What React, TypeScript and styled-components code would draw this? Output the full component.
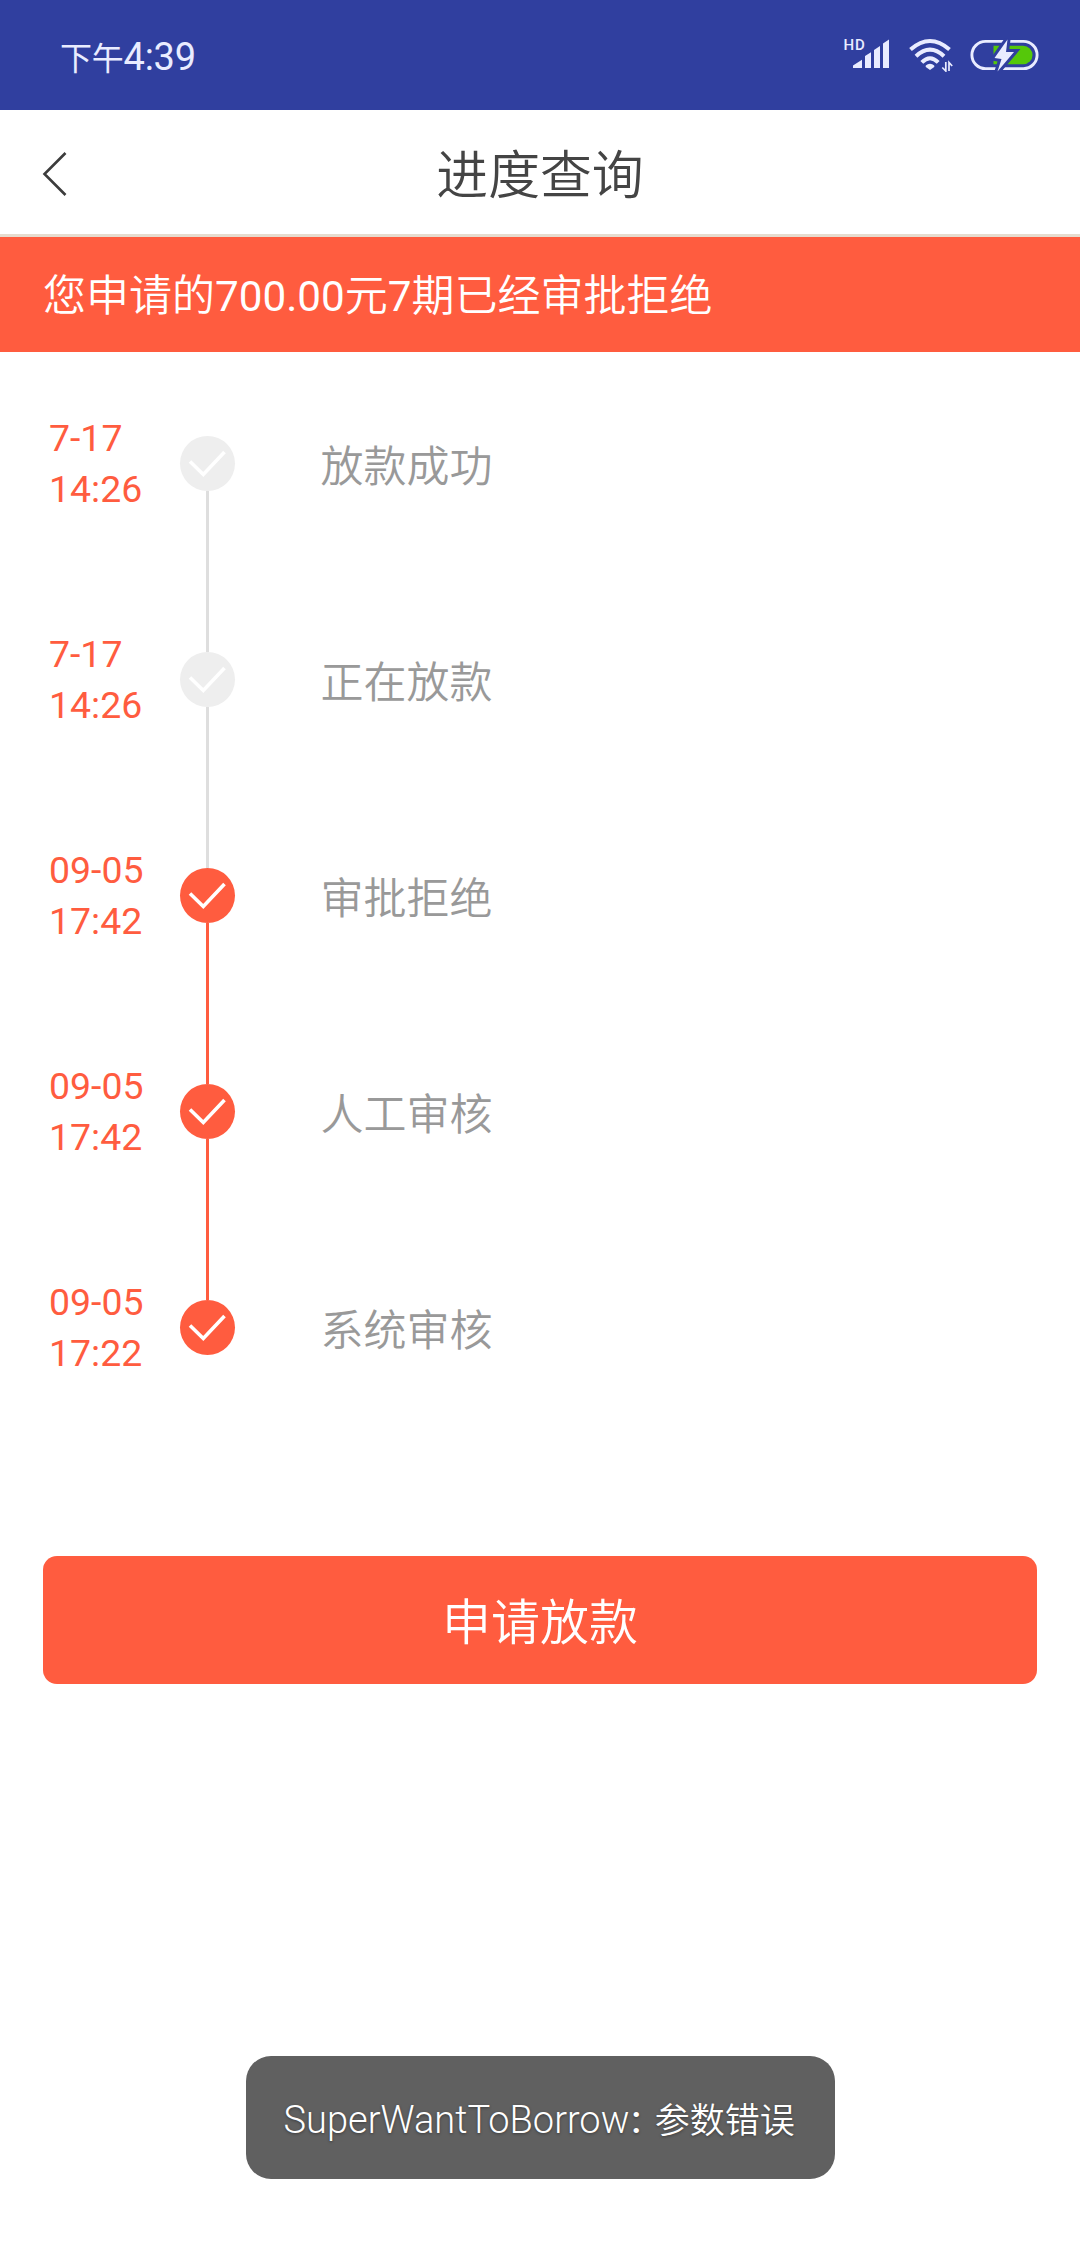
import React from "react";
import styled, { createGlobalStyle } from "styled-components";

const ORANGE = "#ff5c3f";
const CJK = `"Noto Sans CJK SC", sans-serif`;

const GlobalStyle = createGlobalStyle`
  * { box-sizing: border-box; }
  body {
    margin: 0;
    background: #fff;
    font-family: Roboto, ${CJK};
    font-weight: 400;
  }
`;

const Screen = styled.div`
  display: flex;
  flex-direction: column;
  width: 1080px;
  height: 2248px;
  background: #fff;
  overflow: hidden;
`;

const StatusBar = styled.div`
  display: flex;
  flex: none;
  align-items: center;
  justify-content: space-between;
  height: 110px;
  padding: 0 41px 0 60px;
  background: #303f9f;
  color: #e9ecff;
`;

const Clock = styled.div`
  display: flex;
  align-items: baseline;
  padding-top: 3px;
  font-size: 38px;
  font-weight: 400;
  line-height: 44px;
  letter-spacing: -0.3px;
`;

const Meridiem = styled.span`
  font-family: ${CJK};
  font-size: 32px;
  letter-spacing: -0.2px;
  line-height: 40px;
`;

const StatusIcons = styled.div`
  display: flex;
  align-items: center;
`;

const Signal = styled.div`
  position: relative;
  display: flex;
  width: 44px;
  height: 34px;
  margin-right: 20px;
`;

const HdTag = styled.span`
  position: absolute;
  left: -1px;
  top: -1px;
  font-size: 15px;
  line-height: 16px;
  font-weight: 500;
  letter-spacing: 0.8px;
`;

const Wifi = styled.svg`
  margin-right: 17.5px;
`;

const Header = styled.header`
  display: grid;
  flex: none;
  grid-template-columns: 120px 1fr 120px;
  align-items: center;
  height: 127px;
  border-bottom: 3px solid #e6dccf;
`;

const BackButton = styled.button`
  display: flex;
  align-items: center;
  height: 100%;
  padding: 3px 0 0 42px;
  border: 0;
  background: none;
`;

const Title = styled.h1`
  margin: 0;
  font-family: ${CJK};
  font-size: 51.84px;
  line-height: 76px;
  font-weight: 350;
  text-align: center;
  color: #444;
`;

const Banner = styled.div`
  display: flex;
  flex: none;
  align-items: center;
  height: 115px;
  padding: 0 0 0 43px;
  background: ${ORANGE};
  color: #fff;
  font-size: 43px;
  line-height: 60px;
  white-space: nowrap;
`;

const BannerText = styled.span`
  font-family: ${CJK};
  font-weight: 350;
`;

const Amount = styled.span`
  font-family: Roboto, sans-serif;
  font-size: 42.2px;
  font-weight: 400;
`;

const Timeline = styled.ol`
  display: flex;
  flex: none;
  flex-direction: column;
  margin: 0;
  padding: 56px 0 0 49px;
  list-style: none;
`;

const Step = styled.li`
  display: grid;
  grid-template-columns: 131px 55px 1fr;
  height: 216px;
`;

const When = styled.div`
  display: flex;
  flex-direction: column;
  padding-top: 5px;
  color: ${ORANGE};
  font-size: 37.44px;
  line-height: 51px;
`;

const Track = styled.div`
  display: flex;
  flex-direction: column;
  align-items: center;
  padding-top: 28px;
  margin-bottom: -28px;
`;

const Dot = styled.div<{ $active: boolean }>`
  display: flex;
  flex: none;
  width: 55px;
  height: 55px;
  border-radius: 50%;
  background: ${(p) => (p.$active ? ORANGE : "#eeeeee")};
`;

const Line = styled.div<{ $active: boolean }>`
  flex: 1;
  width: 3px;
  background: ${(p) => (p.$active ? ORANGE : "#dedede")};
`;

const Label = styled.div`
  padding: 23px 0 0 85.5px;
  font-family: ${CJK};
  font-size: 43px;
  line-height: 64px;
  font-weight: 350;
  color: #999;
`;

const SubmitButton = styled.button`
  flex: none;
  height: 128px;
  margin: 68px 43px 0;
  padding: 0 0 4px;
  border: 0;
  border-radius: 14px;
  background: ${ORANGE};
  color: #fff;
  font-family: ${CJK};
  font-size: 48.96px;
  font-weight: 350;
`;

const Toast = styled.div`
  display: flex;
  flex: none;
  align-items: baseline;
  align-self: center;
  width: 589px;
  height: 123px;
  margin-top: auto;
  margin-bottom: 69px;
  padding: 36px 0 0 38px;
  border-radius: 25px;
  background: #606060;
  color: #fff;
  font-weight: 300;
  font-size: 38px;
  line-height: 52px;
  text-shadow: 0 1px 3px rgba(0, 0, 0, 0.4);
  white-space: pre;
`;

const ToastColon = styled.span`
  padding: 0 4px 0 2px;
  font-weight: 500;
`;

const ToastMessage = styled.span`
  font-family: ${CJK};
  font-size: 35px;
  font-weight: 350;
`;

const steps = [
  { date: "7-17", time: "14:26", label: "放款成功", active: false },
  { date: "7-17", time: "14:26", label: "正在放款", active: false },
  { date: "09-05", time: "17:42", label: "审批拒绝", active: true },
  { date: "09-05", time: "17:42", label: "人工审核", active: true },
  { date: "09-05", time: "17:22", label: "系统审核", active: true },
];

const SignalIcon = () => (
  <Signal>
    <HdTag>HD</HdTag>
    <svg width="44" height="34" viewBox="845 38 44 34" fill="currentColor">
      <path d="M853 68v-2.500l9-5.800V68zM865 68V56l6-3.800V68zM874 68V50l6-4V68zM883 68V43.500l6-4V68z" />
    </svg>
  </Signal>
);

const WifiIcon = () => (
  <Wifi width="44" height="34" viewBox="909 38 44 34" fill="none" stroke="currentColor" strokeWidth="4">
    <path d="M910.500 49.500Q930 32.500 949.500 49.500" />
    <path d="M916 56.200Q930 43 944 56.200" />
    <path d="M921.800 62.300Q930 54 938.200 62.300" />
    <path d="M925.800 65.500a6 6 0 0 1 8.400 0a2 2 0 0 1 0 1.500L930 70l-4.200-3a2 2 0 0 1 0-1.500z" fill="currentColor" stroke="none" />
    <path d="M945.800 62v9l-3.500-3.500M949 71v-8.500l3.200 3.500" strokeWidth="1.700" />
  </Wifi>
);

const BatteryIcon = () => (
  <svg width="69" height="34" viewBox="970.500 38 69 34">
    <rect x="972.400" y="41.400" width="65.200" height="27.200" rx="13.600" fill="none" stroke="currentColor" strokeWidth="2.900" />
    <path d="M994 45.700h29.700a9.300 9.300 0 0 1 0 18.600h-29.700z" fill="#55c80a" />
    <path
      d="M1008 39.500L995 58L1002 59L998 71.500L1014.500 52H1006.500z"
      fill="currentColor"
      stroke="#303f9f"
      strokeWidth="6"
      paintOrder="stroke"
    />
  </svg>
);

const BackIcon = () => (
  <svg width="26" height="44" viewBox="0 0 26 44" fill="none" stroke="#3c3c3c" strokeWidth="2.600">
    <path d="M23.500 1L2.500 22L23.500 43" />
  </svg>
);

const CheckIcon = () => (
  <svg width="55" height="55" viewBox="0 0 55 55" fill="none" stroke="#fff" strokeWidth="3.600">
    <path d="M10 25.500L23.300 38.500L44.500 16" />
  </svg>
);

export default function App() {
  return (
    <>
      <GlobalStyle />
      <Screen>
        <StatusBar>
          <Clock>
            <Meridiem>下午</Meridiem>4:39
          </Clock>
          <StatusIcons>
            <SignalIcon />
            <WifiIcon />
            <BatteryIcon />
          </StatusIcons>
        </StatusBar>
        <Header>
          <BackButton aria-label="返回">
            <BackIcon />
          </BackButton>
          <Title>进度查询</Title>
        </Header>
        <Banner>
          <BannerText>
            您申请的<Amount>700.00</Amount>元<Amount>7</Amount>期已经审批拒绝
          </BannerText>
        </Banner>
        <Timeline>
          {steps.map((step, i) => (
            <Step key={step.label}>
              <When>
                <span>{step.date}</span>
                <span>{step.time}</span>
              </When>
              <Track>
                <Dot $active={step.active}>
                  <CheckIcon />
                </Dot>
                {i < steps.length - 1 && <Line $active={step.active} />}
              </Track>
              <Label>{step.label}</Label>
            </Step>
          ))}
        </Timeline>
        <SubmitButton>申请放款</SubmitButton>
        <Toast>
          SuperWantToBorrow<ToastColon>: </ToastColon>
          <ToastMessage>参数错误</ToastMessage>
        </Toast>
      </Screen>
    </>
  );
}
